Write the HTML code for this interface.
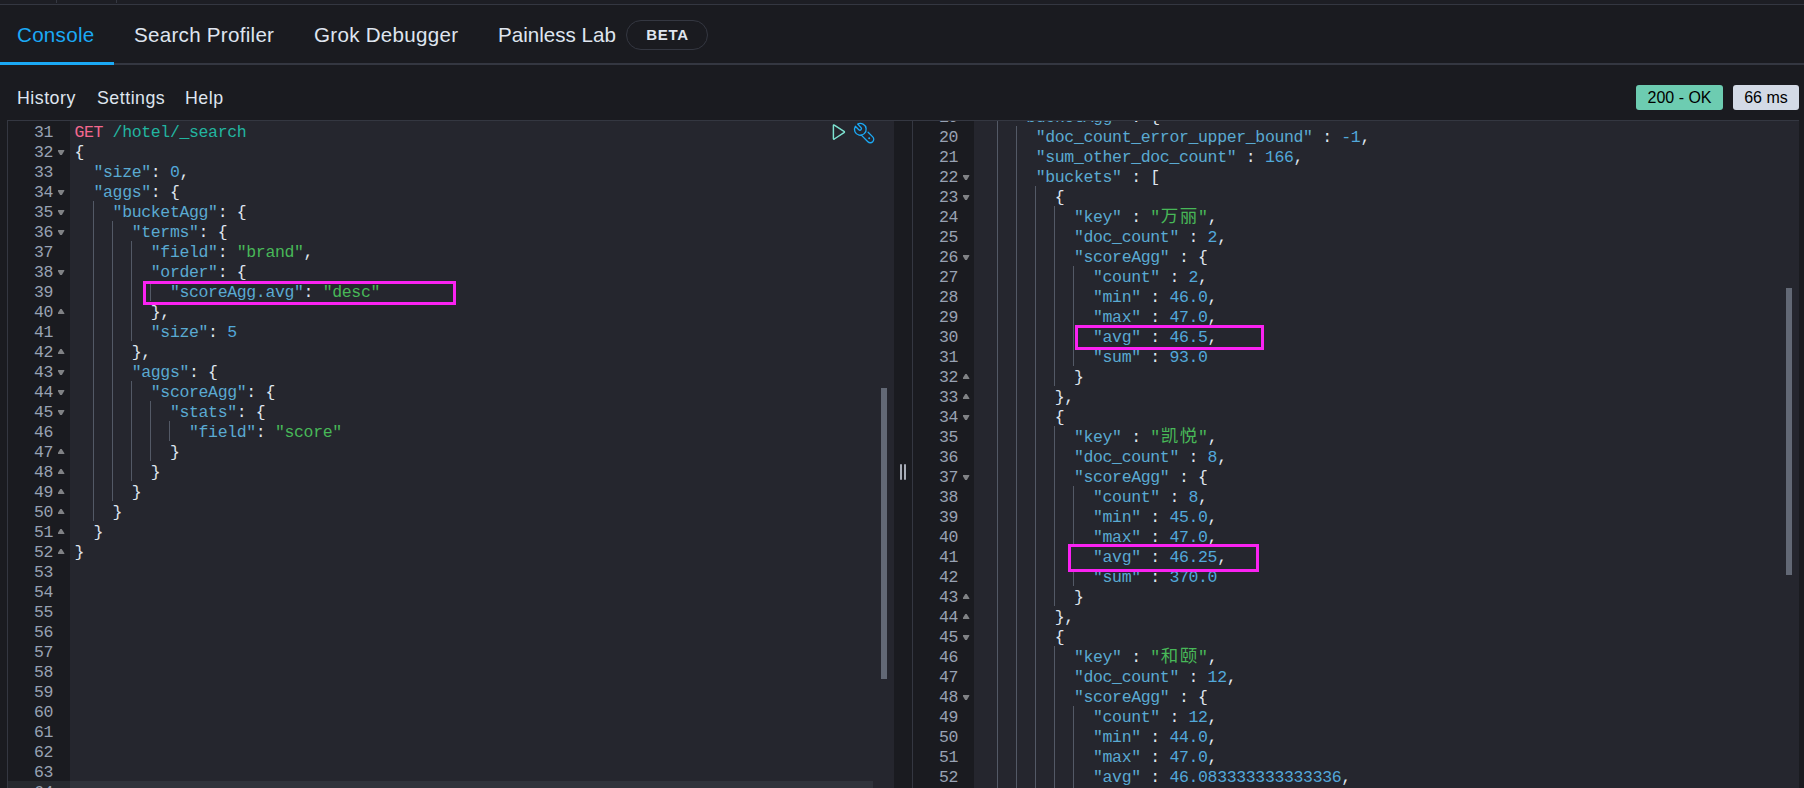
<!DOCTYPE html>
<html lang="en">
<head>
<meta charset="utf-8">
<title>Dev Tools - Console</title>
<style>
*{box-sizing:border-box;margin:0;padding:0}
html,body{width:1804px;height:788px;overflow:hidden;background:#1a1b20}
body{position:relative;font-family:"Liberation Sans","Noto Sans CJK SC",sans-serif;color:#dfe5ef}
.topstrip{position:absolute;left:0;top:0;width:1804px;height:5px;border-bottom:1px solid #343741;background:#1d1e24}
.topstrip i{position:absolute;top:0;width:1px;height:3px;background:#343741}
.tabs{position:absolute;left:0;top:5px;width:1804px;height:60px;border-bottom:2px solid #343741}
.tab{position:absolute;top:0;height:60px;line-height:60px;font-size:20.6px;letter-spacing:.27px;color:#dfe5ef;white-space:nowrap}
.tab.sel{color:#1ba9f5}
.tabline{position:absolute;left:0;top:62px;width:114px;height:3px;background:#1ba9f5}
.beta{position:absolute;left:626px;top:20px;width:82px;height:30px;border:1px solid #343741;border-radius:15px;font-size:15px;font-weight:700;line-height:28px;text-align:center;letter-spacing:.75px;padding-left:1px;color:#dfe5ef}
.menu{position:absolute;top:84px;height:28px;line-height:28px;font-size:17.8px;letter-spacing:.5px;color:#dfe5ef;white-space:nowrap}
.badge{position:absolute;top:85px;height:25px;line-height:25px;border-radius:3px;font-size:16px;color:#000;text-align:center;white-space:nowrap}
.b200{left:1636px;width:87px;background:#6dccb1}
.bms{left:1733px;width:66px;background:#d3dae6}
.ed{position:absolute;top:120px;height:668px;overflow:hidden;background:#25262e;border-top:1px solid #343741}
.ed .gut{position:absolute;left:0;top:0;height:668px;background:#1a1b20}
.ed .code{position:absolute;top:0;height:668px}
.gl{position:absolute;left:0;width:100%;height:20px;line-height:20px;color:#98a2b3;font-family:"Liberation Mono","Noto Sans CJK SC",monospace;font-size:16.5px;letter-spacing:-.352px}
.gl b{font-weight:400;position:absolute;right:17px;top:1.9px}
.fd,.fu{position:absolute;right:5.5px;width:7px;height:5.2px;background:#808285}
.fd{top:9px;clip-path:polygon(0 12%,8% 0,92% 0,100% 12%,60% 100%,40% 100%)}
.fu{top:8px;clip-path:polygon(0 88%,8% 100%,92% 100%,100% 88%,60% 0,40% 0)}
.cl{position:absolute;height:20px;line-height:20px;white-space:pre;font-family:"Liberation Mono","Noto Sans CJK SC",monospace;font-size:16.5px;letter-spacing:-.352px;color:#dfe5ef;padding-top:1.9px}
.ig{position:absolute;width:1px;height:20px;background:#535966}
.m{color:#f4688f}.u{color:#22b5a0}.k{color:#5aaad2}.s{color:#48b858}.n{color:#52a8da}.p{color:#dfe5ef}
.cj{font-family:"Liberation Mono","Noto Sans CJK SC",monospace;font-size:17.5px;letter-spacing:1.6px;line-height:0;margin-left:.8px;margin-right:-.8px}
.hl{position:absolute;border:3px solid #fa22f2;pointer-events:none}
.vsb{position:absolute;width:6px;background:#626875}
.topline{position:absolute;left:7px;top:120px;width:1792px;height:1px;background:#343741}
.sp{position:absolute;top:464px;width:2px;height:16px;border-radius:1px;background:#a8adb8}
#edr .gl b{right:16px}
#edr .fd,#edr .fu{right:4.5px}
</style>
</head>
<body>
<div class="topstrip"><i style="left:56px"></i><i style="left:116px"></i></div>
<div class="tabs">
  <div class="tab sel" style="left:17px">Console</div>
  <div class="tab" style="left:134px">Search Profiler</div>
  <div class="tab" style="left:314px">Grok Debugger</div>
  <div class="tab" style="left:498px;letter-spacing:0">Painless Lab</div>
</div>
<div class="beta">BETA</div>
<div class="tabline"></div>
<div class="menu" style="left:17px">History</div>
<div class="menu" style="left:97px">Settings</div>
<div class="menu" style="left:185px">Help</div>
<div class="badge b200">200 - OK</div>
<div class="badge bms">66 ms</div>

<div class="ed" id="edl" style="left:7px;width:887px;border-left:1px solid #343741">
  <div class="gut" style="width:62px">
<div class="gl" style="top:0px"><b>31</b></div>
<div class="gl" style="top:20px"><b>32</b><i class="fd"></i></div>
<div class="gl" style="top:40px"><b>33</b></div>
<div class="gl" style="top:60px"><b>34</b><i class="fd"></i></div>
<div class="gl" style="top:80px"><b>35</b><i class="fd"></i></div>
<div class="gl" style="top:100px"><b>36</b><i class="fd"></i></div>
<div class="gl" style="top:120px"><b>37</b></div>
<div class="gl" style="top:140px"><b>38</b><i class="fd"></i></div>
<div class="gl" style="top:160px"><b>39</b></div>
<div class="gl" style="top:180px"><b>40</b><i class="fu"></i></div>
<div class="gl" style="top:200px"><b>41</b></div>
<div class="gl" style="top:220px"><b>42</b><i class="fu"></i></div>
<div class="gl" style="top:240px"><b>43</b><i class="fd"></i></div>
<div class="gl" style="top:260px"><b>44</b><i class="fd"></i></div>
<div class="gl" style="top:280px"><b>45</b><i class="fd"></i></div>
<div class="gl" style="top:300px"><b>46</b></div>
<div class="gl" style="top:320px"><b>47</b><i class="fu"></i></div>
<div class="gl" style="top:340px"><b>48</b><i class="fu"></i></div>
<div class="gl" style="top:360px"><b>49</b><i class="fu"></i></div>
<div class="gl" style="top:380px"><b>50</b><i class="fu"></i></div>
<div class="gl" style="top:400px"><b>51</b><i class="fu"></i></div>
<div class="gl" style="top:420px"><b>52</b><i class="fu"></i></div>
<div class="gl" style="top:440px"><b>53</b></div>
<div class="gl" style="top:460px"><b>54</b></div>
<div class="gl" style="top:480px"><b>55</b></div>
<div class="gl" style="top:500px"><b>56</b></div>
<div class="gl" style="top:520px"><b>57</b></div>
<div class="gl" style="top:540px"><b>58</b></div>
<div class="gl" style="top:560px"><b>59</b></div>
<div class="gl" style="top:580px"><b>60</b></div>
<div class="gl" style="top:600px"><b>61</b></div>
<div class="gl" style="top:620px"><b>62</b></div>
<div class="gl" style="top:640px"><b>63</b></div>
<div class="gl" style="top:660px"><b>64</b></div>
  </div>
  <div class="code" style="left:66.4px;width:820px">
<i class="ig" style="top:80px;left:18.6px"></i>
<i class="ig" style="top:100px;left:18.6px"></i>
<i class="ig" style="top:100px;left:37.6px"></i>
<i class="ig" style="top:120px;left:18.6px"></i>
<i class="ig" style="top:120px;left:37.6px"></i>
<i class="ig" style="top:120px;left:56.6px"></i>
<i class="ig" style="top:140px;left:18.6px"></i>
<i class="ig" style="top:140px;left:37.6px"></i>
<i class="ig" style="top:140px;left:56.6px"></i>
<i class="ig" style="top:160px;left:18.6px"></i>
<i class="ig" style="top:160px;left:37.6px"></i>
<i class="ig" style="top:160px;left:56.6px"></i>
<i class="ig" style="top:160px;left:75.6px"></i>
<i class="ig" style="top:180px;left:18.6px"></i>
<i class="ig" style="top:180px;left:37.6px"></i>
<i class="ig" style="top:180px;left:56.6px"></i>
<i class="ig" style="top:200px;left:18.6px"></i>
<i class="ig" style="top:200px;left:37.6px"></i>
<i class="ig" style="top:200px;left:56.6px"></i>
<i class="ig" style="top:220px;left:18.6px"></i>
<i class="ig" style="top:220px;left:37.6px"></i>
<i class="ig" style="top:240px;left:18.6px"></i>
<i class="ig" style="top:240px;left:37.6px"></i>
<i class="ig" style="top:260px;left:18.6px"></i>
<i class="ig" style="top:260px;left:37.6px"></i>
<i class="ig" style="top:260px;left:56.6px"></i>
<i class="ig" style="top:280px;left:18.6px"></i>
<i class="ig" style="top:280px;left:37.6px"></i>
<i class="ig" style="top:280px;left:56.6px"></i>
<i class="ig" style="top:280px;left:75.6px"></i>
<i class="ig" style="top:300px;left:18.6px"></i>
<i class="ig" style="top:300px;left:37.6px"></i>
<i class="ig" style="top:300px;left:56.6px"></i>
<i class="ig" style="top:300px;left:75.6px"></i>
<i class="ig" style="top:300px;left:94.6px"></i>
<i class="ig" style="top:320px;left:18.6px"></i>
<i class="ig" style="top:320px;left:37.6px"></i>
<i class="ig" style="top:320px;left:56.6px"></i>
<i class="ig" style="top:320px;left:75.6px"></i>
<i class="ig" style="top:340px;left:18.6px"></i>
<i class="ig" style="top:340px;left:37.6px"></i>
<i class="ig" style="top:340px;left:56.6px"></i>
<i class="ig" style="top:360px;left:18.6px"></i>
<i class="ig" style="top:360px;left:37.6px"></i>
<i class="ig" style="top:380px;left:18.6px"></i>
<div class="cl" style="top:0px;left:0.00px"><span class="m">GET</span> <span class="u">/hotel/_search</span></div>
<div class="cl" style="top:20px;left:0.00px"><span class="p">{</span></div>
<div class="cl" style="top:40px;left:19.10px"><span class="k">"size"</span><span class="p">: </span><span class="n">0</span><span class="p">,</span></div>
<div class="cl" style="top:60px;left:19.10px"><span class="k">"aggs"</span><span class="p">: </span><span class="p">{</span></div>
<div class="cl" style="top:80px;left:38.20px"><span class="k">"bucketAgg"</span><span class="p">: </span><span class="p">{</span></div>
<div class="cl" style="top:100px;left:57.30px"><span class="k">"terms"</span><span class="p">: </span><span class="p">{</span></div>
<div class="cl" style="top:120px;left:76.40px"><span class="k">"field"</span><span class="p">: </span><span class="s">"brand"</span><span class="p">,</span></div>
<div class="cl" style="top:140px;left:76.40px"><span class="k">"order"</span><span class="p">: </span><span class="p">{</span></div>
<div class="cl" style="top:160px;left:95.50px"><span class="k">"scoreAgg.avg"</span><span class="p">: </span><span class="s">"desc"</span></div>
<div class="cl" style="top:180px;left:76.40px"><span class="p">},</span></div>
<div class="cl" style="top:200px;left:76.40px"><span class="k">"size"</span><span class="p">: </span><span class="n">5</span></div>
<div class="cl" style="top:220px;left:57.30px"><span class="p">},</span></div>
<div class="cl" style="top:240px;left:57.30px"><span class="k">"aggs"</span><span class="p">: </span><span class="p">{</span></div>
<div class="cl" style="top:260px;left:76.40px"><span class="k">"scoreAgg"</span><span class="p">: </span><span class="p">{</span></div>
<div class="cl" style="top:280px;left:95.50px"><span class="k">"stats"</span><span class="p">: </span><span class="p">{</span></div>
<div class="cl" style="top:300px;left:114.60px"><span class="k">"field"</span><span class="p">: </span><span class="s">"score"</span></div>
<div class="cl" style="top:320px;left:95.50px"><span class="p">}</span></div>
<div class="cl" style="top:340px;left:76.40px"><span class="p">}</span></div>
<div class="cl" style="top:360px;left:57.30px"><span class="p">}</span></div>
<div class="cl" style="top:380px;left:38.20px"><span class="p">}</span></div>
<div class="cl" style="top:400px;left:19.10px"><span class="p">}</span></div>
<div class="cl" style="top:420px;left:0.00px"><span class="p">}</span></div>
  </div>
  <svg class="ico" style="position:absolute;left:822px;top:0" width="50" height="24" viewBox="0 0 50 24">
    <path d="M3.4 4.6 Q3.4 3.6 4.3 4.1 L14 10.4 Q14.9 11.05 14 11.7 L4.3 18 Q3.4 18.5 3.4 17.5 Z" fill="none" stroke="#7de2d1" stroke-width="1.45" stroke-linejoin="round"/>
    <g transform="translate(24 2)" fill="none" stroke="#1ba9f5" stroke-width="1.3" stroke-linecap="round" stroke-linejoin="round">
      <path d="M3.64 1.15 A5.85 5.85 0 1 1 1.33 3.29 L4.78 6.72 A1.57 1.57 0 0 0 7 4.5 Z"/>
      <path d="M14.1 9.25 L18.73 13.87 A3.43 3.43 0 0 1 13.87 18.73 L7.3 12.1"/>
      <circle cx="15.2" cy="15.2" r="1" fill="#1ba9f5" stroke="none"/>
    </g>
  </svg>
  <div class="vsb" style="left:873px;top:267px;height:291px"></div>
  <div style="position:absolute;left:0;top:660px;width:865px;height:8px;background:rgba(152,162,179,.1)"></div>
</div>

<div class="topline"></div>
<i class="sp" style="left:900px"></i><i class="sp" style="left:904px"></i>

<div class="ed" id="edr" style="left:912px;width:887px;border-left:1px solid #343741">
  <div class="gut" style="width:61px">
<div class="gl" style="top:-15px"><b>19</b><i class="fd"></i></div>
<div class="gl" style="top:5px"><b>20</b></div>
<div class="gl" style="top:25px"><b>21</b></div>
<div class="gl" style="top:45px"><b>22</b><i class="fd"></i></div>
<div class="gl" style="top:65px"><b>23</b><i class="fd"></i></div>
<div class="gl" style="top:85px"><b>24</b></div>
<div class="gl" style="top:105px"><b>25</b></div>
<div class="gl" style="top:125px"><b>26</b><i class="fd"></i></div>
<div class="gl" style="top:145px"><b>27</b></div>
<div class="gl" style="top:165px"><b>28</b></div>
<div class="gl" style="top:185px"><b>29</b></div>
<div class="gl" style="top:205px"><b>30</b></div>
<div class="gl" style="top:225px"><b>31</b></div>
<div class="gl" style="top:245px"><b>32</b><i class="fu"></i></div>
<div class="gl" style="top:265px"><b>33</b><i class="fu"></i></div>
<div class="gl" style="top:285px"><b>34</b><i class="fd"></i></div>
<div class="gl" style="top:305px"><b>35</b></div>
<div class="gl" style="top:325px"><b>36</b></div>
<div class="gl" style="top:345px"><b>37</b><i class="fd"></i></div>
<div class="gl" style="top:365px"><b>38</b></div>
<div class="gl" style="top:385px"><b>39</b></div>
<div class="gl" style="top:405px"><b>40</b></div>
<div class="gl" style="top:425px"><b>41</b></div>
<div class="gl" style="top:445px"><b>42</b></div>
<div class="gl" style="top:465px"><b>43</b><i class="fu"></i></div>
<div class="gl" style="top:485px"><b>44</b><i class="fu"></i></div>
<div class="gl" style="top:505px"><b>45</b><i class="fd"></i></div>
<div class="gl" style="top:525px"><b>46</b></div>
<div class="gl" style="top:545px"><b>47</b></div>
<div class="gl" style="top:565px"><b>48</b><i class="fd"></i></div>
<div class="gl" style="top:585px"><b>49</b></div>
<div class="gl" style="top:605px"><b>50</b></div>
<div class="gl" style="top:625px"><b>51</b></div>
<div class="gl" style="top:645px"><b>52</b></div>
<div class="gl" style="top:665px"><b>53</b></div>
  </div>
  <div class="code" style="left:65.4px;width:820px">
<i class="ig" style="top:-15px;left:18.6px"></i>
<i class="ig" style="top:5px;left:18.6px"></i>
<i class="ig" style="top:5px;left:37.6px"></i>
<i class="ig" style="top:25px;left:18.6px"></i>
<i class="ig" style="top:25px;left:37.6px"></i>
<i class="ig" style="top:45px;left:18.6px"></i>
<i class="ig" style="top:45px;left:37.6px"></i>
<i class="ig" style="top:65px;left:18.6px"></i>
<i class="ig" style="top:65px;left:37.6px"></i>
<i class="ig" style="top:65px;left:56.6px"></i>
<i class="ig" style="top:85px;left:18.6px"></i>
<i class="ig" style="top:85px;left:37.6px"></i>
<i class="ig" style="top:85px;left:56.6px"></i>
<i class="ig" style="top:85px;left:75.6px"></i>
<i class="ig" style="top:105px;left:18.6px"></i>
<i class="ig" style="top:105px;left:37.6px"></i>
<i class="ig" style="top:105px;left:56.6px"></i>
<i class="ig" style="top:105px;left:75.6px"></i>
<i class="ig" style="top:125px;left:18.6px"></i>
<i class="ig" style="top:125px;left:37.6px"></i>
<i class="ig" style="top:125px;left:56.6px"></i>
<i class="ig" style="top:125px;left:75.6px"></i>
<i class="ig" style="top:145px;left:18.6px"></i>
<i class="ig" style="top:145px;left:37.6px"></i>
<i class="ig" style="top:145px;left:56.6px"></i>
<i class="ig" style="top:145px;left:75.6px"></i>
<i class="ig" style="top:145px;left:94.6px"></i>
<i class="ig" style="top:165px;left:18.6px"></i>
<i class="ig" style="top:165px;left:37.6px"></i>
<i class="ig" style="top:165px;left:56.6px"></i>
<i class="ig" style="top:165px;left:75.6px"></i>
<i class="ig" style="top:165px;left:94.6px"></i>
<i class="ig" style="top:185px;left:18.6px"></i>
<i class="ig" style="top:185px;left:37.6px"></i>
<i class="ig" style="top:185px;left:56.6px"></i>
<i class="ig" style="top:185px;left:75.6px"></i>
<i class="ig" style="top:185px;left:94.6px"></i>
<i class="ig" style="top:205px;left:18.6px"></i>
<i class="ig" style="top:205px;left:37.6px"></i>
<i class="ig" style="top:205px;left:56.6px"></i>
<i class="ig" style="top:205px;left:75.6px"></i>
<i class="ig" style="top:205px;left:94.6px"></i>
<i class="ig" style="top:225px;left:18.6px"></i>
<i class="ig" style="top:225px;left:37.6px"></i>
<i class="ig" style="top:225px;left:56.6px"></i>
<i class="ig" style="top:225px;left:75.6px"></i>
<i class="ig" style="top:225px;left:94.6px"></i>
<i class="ig" style="top:245px;left:18.6px"></i>
<i class="ig" style="top:245px;left:37.6px"></i>
<i class="ig" style="top:245px;left:56.6px"></i>
<i class="ig" style="top:245px;left:75.6px"></i>
<i class="ig" style="top:265px;left:18.6px"></i>
<i class="ig" style="top:265px;left:37.6px"></i>
<i class="ig" style="top:265px;left:56.6px"></i>
<i class="ig" style="top:285px;left:18.6px"></i>
<i class="ig" style="top:285px;left:37.6px"></i>
<i class="ig" style="top:285px;left:56.6px"></i>
<i class="ig" style="top:305px;left:18.6px"></i>
<i class="ig" style="top:305px;left:37.6px"></i>
<i class="ig" style="top:305px;left:56.6px"></i>
<i class="ig" style="top:305px;left:75.6px"></i>
<i class="ig" style="top:325px;left:18.6px"></i>
<i class="ig" style="top:325px;left:37.6px"></i>
<i class="ig" style="top:325px;left:56.6px"></i>
<i class="ig" style="top:325px;left:75.6px"></i>
<i class="ig" style="top:345px;left:18.6px"></i>
<i class="ig" style="top:345px;left:37.6px"></i>
<i class="ig" style="top:345px;left:56.6px"></i>
<i class="ig" style="top:345px;left:75.6px"></i>
<i class="ig" style="top:365px;left:18.6px"></i>
<i class="ig" style="top:365px;left:37.6px"></i>
<i class="ig" style="top:365px;left:56.6px"></i>
<i class="ig" style="top:365px;left:75.6px"></i>
<i class="ig" style="top:365px;left:94.6px"></i>
<i class="ig" style="top:385px;left:18.6px"></i>
<i class="ig" style="top:385px;left:37.6px"></i>
<i class="ig" style="top:385px;left:56.6px"></i>
<i class="ig" style="top:385px;left:75.6px"></i>
<i class="ig" style="top:385px;left:94.6px"></i>
<i class="ig" style="top:405px;left:18.6px"></i>
<i class="ig" style="top:405px;left:37.6px"></i>
<i class="ig" style="top:405px;left:56.6px"></i>
<i class="ig" style="top:405px;left:75.6px"></i>
<i class="ig" style="top:405px;left:94.6px"></i>
<i class="ig" style="top:425px;left:18.6px"></i>
<i class="ig" style="top:425px;left:37.6px"></i>
<i class="ig" style="top:425px;left:56.6px"></i>
<i class="ig" style="top:425px;left:75.6px"></i>
<i class="ig" style="top:425px;left:94.6px"></i>
<i class="ig" style="top:445px;left:18.6px"></i>
<i class="ig" style="top:445px;left:37.6px"></i>
<i class="ig" style="top:445px;left:56.6px"></i>
<i class="ig" style="top:445px;left:75.6px"></i>
<i class="ig" style="top:445px;left:94.6px"></i>
<i class="ig" style="top:465px;left:18.6px"></i>
<i class="ig" style="top:465px;left:37.6px"></i>
<i class="ig" style="top:465px;left:56.6px"></i>
<i class="ig" style="top:465px;left:75.6px"></i>
<i class="ig" style="top:485px;left:18.6px"></i>
<i class="ig" style="top:485px;left:37.6px"></i>
<i class="ig" style="top:485px;left:56.6px"></i>
<i class="ig" style="top:505px;left:18.6px"></i>
<i class="ig" style="top:505px;left:37.6px"></i>
<i class="ig" style="top:505px;left:56.6px"></i>
<i class="ig" style="top:525px;left:18.6px"></i>
<i class="ig" style="top:525px;left:37.6px"></i>
<i class="ig" style="top:525px;left:56.6px"></i>
<i class="ig" style="top:525px;left:75.6px"></i>
<i class="ig" style="top:545px;left:18.6px"></i>
<i class="ig" style="top:545px;left:37.6px"></i>
<i class="ig" style="top:545px;left:56.6px"></i>
<i class="ig" style="top:545px;left:75.6px"></i>
<i class="ig" style="top:565px;left:18.6px"></i>
<i class="ig" style="top:565px;left:37.6px"></i>
<i class="ig" style="top:565px;left:56.6px"></i>
<i class="ig" style="top:565px;left:75.6px"></i>
<i class="ig" style="top:585px;left:18.6px"></i>
<i class="ig" style="top:585px;left:37.6px"></i>
<i class="ig" style="top:585px;left:56.6px"></i>
<i class="ig" style="top:585px;left:75.6px"></i>
<i class="ig" style="top:585px;left:94.6px"></i>
<i class="ig" style="top:605px;left:18.6px"></i>
<i class="ig" style="top:605px;left:37.6px"></i>
<i class="ig" style="top:605px;left:56.6px"></i>
<i class="ig" style="top:605px;left:75.6px"></i>
<i class="ig" style="top:605px;left:94.6px"></i>
<i class="ig" style="top:625px;left:18.6px"></i>
<i class="ig" style="top:625px;left:37.6px"></i>
<i class="ig" style="top:625px;left:56.6px"></i>
<i class="ig" style="top:625px;left:75.6px"></i>
<i class="ig" style="top:625px;left:94.6px"></i>
<i class="ig" style="top:645px;left:18.6px"></i>
<i class="ig" style="top:645px;left:37.6px"></i>
<i class="ig" style="top:645px;left:56.6px"></i>
<i class="ig" style="top:645px;left:75.6px"></i>
<i class="ig" style="top:645px;left:94.6px"></i>
<i class="ig" style="top:665px;left:18.6px"></i>
<i class="ig" style="top:665px;left:37.6px"></i>
<i class="ig" style="top:665px;left:56.6px"></i>
<i class="ig" style="top:665px;left:75.6px"></i>
<i class="ig" style="top:665px;left:94.6px"></i>
<div class="cl" style="top:-15px;left:38.20px"><span class="k">"bucketAgg"</span><span class="p"> : </span><span class="p">{</span></div>
<div class="cl" style="top:5px;left:57.30px"><span class="k">"doc_count_error_upper_bound"</span><span class="p"> : </span><span class="n">-1</span><span class="p">,</span></div>
<div class="cl" style="top:25px;left:57.30px"><span class="k">"sum_other_doc_count"</span><span class="p"> : </span><span class="n">166</span><span class="p">,</span></div>
<div class="cl" style="top:45px;left:57.30px"><span class="k">"buckets"</span><span class="p"> : </span><span class="p">[</span></div>
<div class="cl" style="top:65px;left:76.40px"><span class="p">{</span></div>
<div class="cl" style="top:85px;left:95.50px"><span class="k">"key"</span><span class="p"> : </span><span class="s">"<span class="cj">万丽</span>"</span><span class="p">,</span></div>
<div class="cl" style="top:105px;left:95.50px"><span class="k">"doc_count"</span><span class="p"> : </span><span class="n">2</span><span class="p">,</span></div>
<div class="cl" style="top:125px;left:95.50px"><span class="k">"scoreAgg"</span><span class="p"> : </span><span class="p">{</span></div>
<div class="cl" style="top:145px;left:114.60px"><span class="k">"count"</span><span class="p"> : </span><span class="n">2</span><span class="p">,</span></div>
<div class="cl" style="top:165px;left:114.60px"><span class="k">"min"</span><span class="p"> : </span><span class="n">46.0</span><span class="p">,</span></div>
<div class="cl" style="top:185px;left:114.60px"><span class="k">"max"</span><span class="p"> : </span><span class="n">47.0</span><span class="p">,</span></div>
<div class="cl" style="top:205px;left:114.60px"><span class="k">"avg"</span><span class="p"> : </span><span class="n">46.5</span><span class="p">,</span></div>
<div class="cl" style="top:225px;left:114.60px"><span class="k">"sum"</span><span class="p"> : </span><span class="n">93.0</span></div>
<div class="cl" style="top:245px;left:95.50px"><span class="p">}</span></div>
<div class="cl" style="top:265px;left:76.40px"><span class="p">},</span></div>
<div class="cl" style="top:285px;left:76.40px"><span class="p">{</span></div>
<div class="cl" style="top:305px;left:95.50px"><span class="k">"key"</span><span class="p"> : </span><span class="s">"<span class="cj">凯悦</span>"</span><span class="p">,</span></div>
<div class="cl" style="top:325px;left:95.50px"><span class="k">"doc_count"</span><span class="p"> : </span><span class="n">8</span><span class="p">,</span></div>
<div class="cl" style="top:345px;left:95.50px"><span class="k">"scoreAgg"</span><span class="p"> : </span><span class="p">{</span></div>
<div class="cl" style="top:365px;left:114.60px"><span class="k">"count"</span><span class="p"> : </span><span class="n">8</span><span class="p">,</span></div>
<div class="cl" style="top:385px;left:114.60px"><span class="k">"min"</span><span class="p"> : </span><span class="n">45.0</span><span class="p">,</span></div>
<div class="cl" style="top:405px;left:114.60px"><span class="k">"max"</span><span class="p"> : </span><span class="n">47.0</span><span class="p">,</span></div>
<div class="cl" style="top:425px;left:114.60px"><span class="k">"avg"</span><span class="p"> : </span><span class="n">46.25</span><span class="p">,</span></div>
<div class="cl" style="top:445px;left:114.60px"><span class="k">"sum"</span><span class="p"> : </span><span class="n">370.0</span></div>
<div class="cl" style="top:465px;left:95.50px"><span class="p">}</span></div>
<div class="cl" style="top:485px;left:76.40px"><span class="p">},</span></div>
<div class="cl" style="top:505px;left:76.40px"><span class="p">{</span></div>
<div class="cl" style="top:525px;left:95.50px"><span class="k">"key"</span><span class="p"> : </span><span class="s">"<span class="cj">和颐</span>"</span><span class="p">,</span></div>
<div class="cl" style="top:545px;left:95.50px"><span class="k">"doc_count"</span><span class="p"> : </span><span class="n">12</span><span class="p">,</span></div>
<div class="cl" style="top:565px;left:95.50px"><span class="k">"scoreAgg"</span><span class="p"> : </span><span class="p">{</span></div>
<div class="cl" style="top:585px;left:114.60px"><span class="k">"count"</span><span class="p"> : </span><span class="n">12</span><span class="p">,</span></div>
<div class="cl" style="top:605px;left:114.60px"><span class="k">"min"</span><span class="p"> : </span><span class="n">44.0</span><span class="p">,</span></div>
<div class="cl" style="top:625px;left:114.60px"><span class="k">"max"</span><span class="p"> : </span><span class="n">47.0</span><span class="p">,</span></div>
<div class="cl" style="top:645px;left:114.60px"><span class="k">"avg"</span><span class="p"> : </span><span class="n">46.083333333333336</span><span class="p">,</span></div>
<div class="cl" style="top:665px;left:114.60px"><span class="k">"sum"</span><span class="p"> : </span><span class="n">553.0</span></div>
  </div>
  <div class="vsb" style="left:873px;top:167px;height:287px"></div>
</div>

<div class="hl" style="left:143px;top:281px;width:313px;height:24px"></div>
<div class="hl" style="left:1075px;top:325px;width:189px;height:25px"></div>
<div class="hl" style="left:1068px;top:544px;width:191px;height:28px"><i style="position:absolute;left:2px;top:0;width:1px;height:22px;background:#25262e"></i></div>

</body>
</html>
